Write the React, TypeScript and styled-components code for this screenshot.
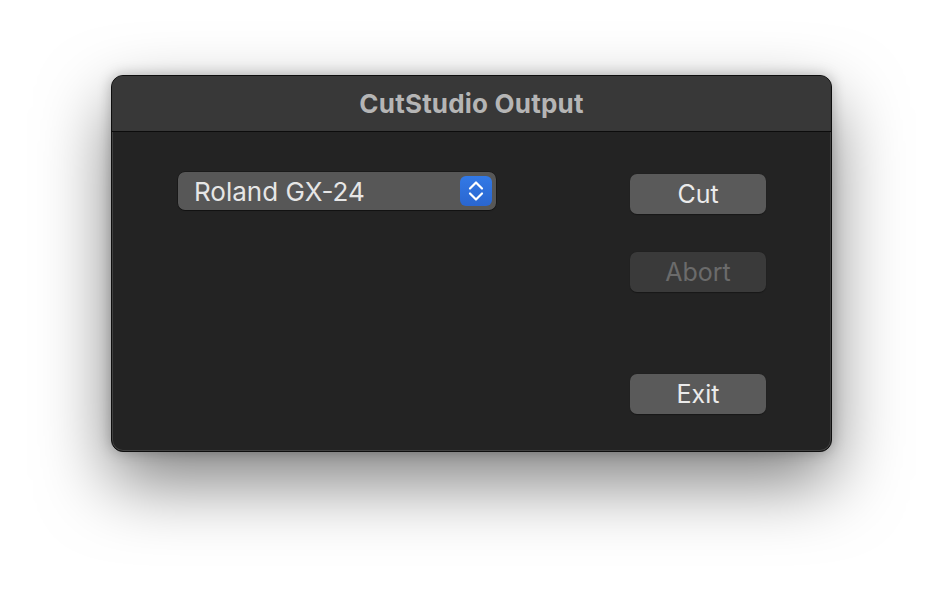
import React from "react";
import styled, { createGlobalStyle } from "styled-components";

const Global = createGlobalStyle`
  html, body { margin: 0; padding: 0; background: #ffffff; }
  body { font-family: Inter, "Liberation Sans", sans-serif; -webkit-font-smoothing: antialiased; }
`;

const Stage = styled.div`
  width: 944px;
  height: 600px;
  display: flex;
  align-items: flex-start;
  justify-content: flex-start;
  padding: 75px 0 0 111px;
  box-sizing: border-box;
  background: #ffffff;
`;

const Window = styled.div`
  width: 721px;
  height: 377px;
  box-sizing: border-box;
  border-radius: 12px;
  background: #232323;
  border: 1px solid #0e0e0e;
  box-shadow: 0 0 0 1px rgba(120,120,120,0.35) inset, 0 30px 70px rgba(0,0,0,0.5), 0 0 14px rgba(0,0,0,0.25);
  display: flex;
  flex-direction: column;
  overflow: hidden;
`;

const TitleBar = styled.div`
  height: 55px;
  flex: none;
  background: #383838;
  border-bottom: 1px solid #0c0c0c;
  display: flex;
  align-items: center;
  justify-content: center;
  color: #b5b5b5;
  font-weight: 700;
  font-size: 26px;
  letter-spacing: 0.2px;
`;

const Body = styled.div`
  flex: 1;
  display: flex;
  justify-content: space-between;
  padding: 40px 65px 0 66px;
`;

const Popup = styled.div`
  width: 318px;
  height: 38px;
  box-sizing: border-box;
  border-radius: 7px;
  background: #575757;
  box-shadow: 0 0 0 0.5px rgba(0,0,0,0.5), 0 1px 1px rgba(0,0,0,0.3);
  display: flex;
  align-items: center;
  justify-content: space-between;
  padding: 0 4px 0 16px;
  color: #e6e6e6;
  font-size: 26px;
`;

const Stepper = styled.div`
  width: 32px;
  height: 30px;
  border-radius: 6px;
  background: linear-gradient(#3279e6, #2a66d0);
  display: flex;
  align-items: center;
  justify-content: center;
`;

const Buttons = styled.div`
  display: flex;
  flex-direction: column;
  padding-top: 2px;
`;

const Button = styled.div<{ $disabled?: boolean; $gap?: number }>`
  width: 136px;
  height: 40px;
  margin-top: ${(p) => p.$gap ?? 0}px;
  border-radius: 7px;
  background: ${(p) => (p.$disabled ? "#3a3a3a" : "#5a5a5a")};
  color: ${(p) => (p.$disabled ? "#6b6b6b" : "#ebebeb")};
  font-size: 25px;
  display: flex;
  align-items: center;
  justify-content: center;
  box-shadow: 0 0.5px 1px rgba(0,0,0,0.35);
`;

export default function App() {
  return (
    <>
      <Global />
      <Stage>
        <Window>
          <TitleBar>CutStudio Output</TitleBar>
          <Body>
            <Popup>
              <span>Roland GX-24</span>
              <Stepper>
                <svg width="16" height="24" viewBox="0 0 16 24" fill="none" stroke="#ffffff" strokeWidth="2.2" strokeLinecap="round" strokeLinejoin="round">
                  <path d="M2 9.5 L8 3.5 L14 9.5" />
                  <path d="M2 14.5 L8 20.5 L14 14.5" />
                </svg>
              </Stepper>
            </Popup>
            <Buttons>
              <Button>Cut</Button>
              <Button $disabled $gap={38}>Abort</Button>
              <Button $gap={82}>Exit</Button>
            </Buttons>
          </Body>
        </Window>
      </Stage>
    </>
  );
}
